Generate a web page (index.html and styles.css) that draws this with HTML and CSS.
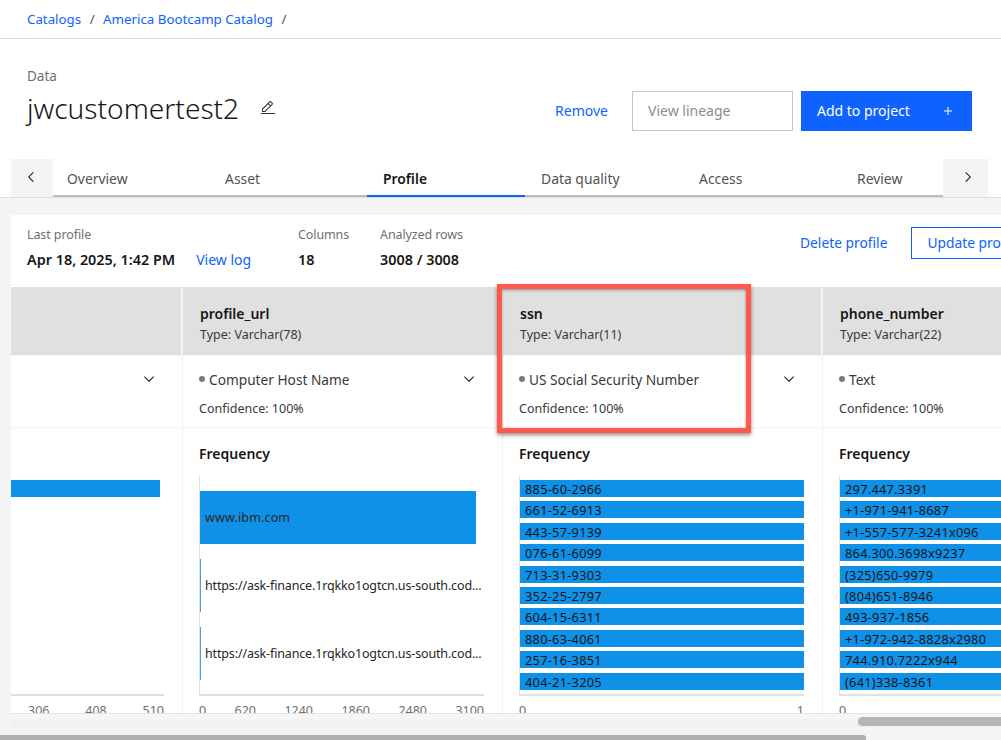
FILE: index.html
```html
<!DOCTYPE html>
<html lang="en">
<head>
<meta charset="utf-8">
<title>jwcustomertest2</title>
<link rel="stylesheet" href="styles.css">
</head>
<body>
<svg class="defs" width="0" height="0" aria-hidden="true">
  <symbol id="i-down" viewBox="0 0 32 32"><path d="M16 22L6 12l1.4-1.4L16 19.2l8.6-8.6L26 12z"/></symbol>
  <symbol id="i-left" viewBox="0 0 32 32"><path d="M10 16L20 6l1.4 1.4L12.8 16l8.6 8.6L20 26z"/></symbol>
  <symbol id="i-right" viewBox="0 0 32 32"><path d="M22 16L12 26l-1.4-1.4L19.2 16l-8.6-8.6L12 6z"/></symbol>
  <symbol id="i-plus" viewBox="0 0 32 32"><path d="M17 15V8h-2v7H8v2h7v7h2v-7h7v-2h-7z"/></symbol>
  <symbol id="i-edit" viewBox="0 0 32 32"><path d="M2 26h28v2H2zM25.4 9c.8-.8.8-2 0-2.8l-3.6-3.6c-.8-.8-2-.8-2.8 0l-15 15V24h6.4l15-15zm-5-5L24 7.6l-3 3L17.4 7l3-3zM6 22v-3.6l10-10l3.6 3.6l-10 10H6z"/></symbol>
</svg>
<div class="page">
  <nav class="crumbs">
    <a class="link">Catalogs</a><span class="sep">/</span>
    <a class="link">America Bootcamp Catalog</a><span class="sep">/</span>
  </nav>

  <header class="head">
    <div class="head-title">
      <div class="eyebrow">Data</div>
      <div class="title-row">
        <h1 class="title">jwcustomertest2</h1>
        <svg class="edit"><use href="#i-edit"/></svg>
      </div>
    </div>
    <div class="actions">
      <a class="link remove">Remove</a>
      <div class="btn-lineage">View lineage</div>
      <div class="btn-add"><span class="add-label">Add to project</span><svg class="plus"><use href="#i-plus"/></svg></div>
    </div>
  </header>

  <div class="tabbar">
    <div class="tab-arrow"><svg class="arrow"><use href="#i-left"/></svg></div>
    <div class="tabs">
      <div class="tab">Overview</div>
      <div class="tab">Asset</div>
      <div class="tab active">Profile</div>
      <div class="tab">Data quality</div>
      <div class="tab">Access</div>
      <div class="tab">Review</div>
    </div>
    <div class="tab-arrow right"><svg class="arrow"><use href="#i-right"/></svg></div>
  </div>

  <main class="content">
    <section class="panel">
      <div class="summary">
        <div class="stat stat-last">
          <div class="stat-label">Last profile</div>
          <div class="stat-line"><span class="stat-value">Apr 18, 2025, 1:42 PM</span><a class="link viewlog">View log</a></div>
        </div>
        <div class="stat stat-cols">
          <div class="stat-label">Columns</div>
          <div class="stat-value">18</div>
        </div>
        <div class="stat stat-rows">
          <div class="stat-label">Analyzed rows</div>
          <div class="stat-value">3008 / 3008</div>
        </div>
        <div class="summary-actions">
          <a class="link delete">Delete profile</a>
          <div class="btn-update">Update profile</div>
        </div>
      </div>

      <div class="grid">
        <div class="col col-first">
          <div class="col-head"></div>
          <div class="col-class"><div class="class-line"><span class="class-name"></span><svg class="chev"><use href="#i-down"/></svg></div></div>
          <div class="col-freq">
            <div class="chart chart-first">
              <div class="plot plot-first"><div class="bar bar-first"></div></div>
              <div class="ticks ticks-first"><span>306</span><span>408</span><span>510</span></div>
            </div>
          </div>
        </div>

        <div class="col">
          <div class="col-head"><div class="col-name">profile_url</div><div class="col-type">Type: Varchar(78)</div></div>
          <div class="col-class">
            <div class="class-line"><span class="class-name"><i class="dot"></i>Computer Host Name</span><svg class="chev"><use href="#i-down"/></svg></div>
            <div class="confidence">Confidence: 100%</div>
          </div>
          <div class="col-freq">
            <div class="freq-title">Frequency</div>
            <div class="chart">
              <div class="plot plot-tall">
                <div class="tall"><div class="tall-bar full"></div><span class="bar-text">www.ibm.com</span></div>
                <div class="tall"><div class="tall-bar thin"></div><span class="bar-text url">https://ask-finance.1rqkko1ogtcn.us-south.cod...</span></div>
                <div class="tall"><div class="tall-bar thin"></div><span class="bar-text url">https://ask-finance.1rqkko1ogtcn.us-south.cod...</span></div>
              </div>
              <div class="ticks"><span>0</span><span>620</span><span>1240</span><span>1860</span><span>2480</span><span>3100</span></div>
            </div>
          </div>
        </div>

        <div class="col">
          <div class="col-head"><div class="col-name">ssn</div><div class="col-type">Type: Varchar(11)</div></div>
          <div class="col-class">
            <div class="class-line"><span class="class-name"><i class="dot"></i>US Social Security Number</span><svg class="chev"><use href="#i-down"/></svg></div>
            <div class="confidence">Confidence: 100%</div>
          </div>
          <div class="col-freq">
            <div class="freq-title">Frequency</div>
            <div class="chart">
              <div class="plot">
                <div class="bar">885-60-2966</div><div class="bar">661-52-6913</div><div class="bar">443-57-9139</div><div class="bar">076-61-6099</div><div class="bar">713-31-9303</div><div class="bar">352-25-2797</div><div class="bar">604-15-6311</div><div class="bar">880-63-4061</div><div class="bar">257-16-3851</div><div class="bar">404-21-3205</div>
              </div>
              <div class="ticks"><span>0</span><span>1</span></div>
            </div>
          </div>
        </div>

        <div class="col">
          <div class="col-head"><div class="col-name">phone_number</div><div class="col-type">Type: Varchar(22)</div></div>
          <div class="col-class">
            <div class="class-line"><span class="class-name"><i class="dot"></i>Text</span></div>
            <div class="confidence">Confidence: 100%</div>
          </div>
          <div class="col-freq">
            <div class="freq-title">Frequency</div>
            <div class="chart">
              <div class="plot">
                <div class="bar">297.447.3391</div><div class="bar">+1-971-941-8687</div><div class="bar">+1-557-577-3241x096</div><div class="bar">864.300.3698x9237</div><div class="bar">(325)650-9979</div><div class="bar">(804)651-8946</div><div class="bar">493-937-1856</div><div class="bar">+1-972-942-8828x2980</div><div class="bar">744.910.7222x944</div><div class="bar">(641)338-8361</div>
              </div>
              <div class="ticks"><span>0</span><span>1</span></div>
            </div>
          </div>
        </div>
      </div>

      <div class="hscroll"><div class="hscroll-thumb"></div></div>
      <div class="callout"></div>
    </section>
    <div class="page-scroll"><div class="page-scroll-thumb"></div></div>
  </main>
</div>
</body>
</html>
```

FILE: styles.css
```css
* { box-sizing: border-box; }
html, body { margin: 0; height: 740px; overflow: hidden; background: #fff; }
body { font-family: "Noto Sans", "Open Sans", sans-serif; color: #161616; font-size: 14px; }
.defs { position: absolute; }
svg { fill: currentColor; display: block; flex: none; }
.page { display: flex; flex-direction: column; height: 740px; }
.link { color: #0f62fe; }

.crumbs { height: 39px; flex: none; border-bottom: 1px solid #dcdcdc; padding: 0 0 0 27px; display: flex; align-items: center; font-size: 13.3px; line-height: 20px; }
.sep { margin: 0 8.5px; color: #525252; }

.head { height: 120px; flex: none; display: flex; justify-content: space-between; padding: 0 29px 0 27px; }
.head-title { padding-top: 27px; }
.eyebrow { font-size: 13.5px; line-height: 20px; color: #6f6f6f; }
.title-row { display: flex; align-items: center; margin-top: 3px; }
.title { margin: 0; font-size: 28.1px; line-height: 38px; font-weight: 300; color: #161616; }
.edit { width: 16px; height: 16px; margin-left: 21px; margin-top: -1px; color: #333; }
.actions { display: flex; align-items: flex-start; padding-top: 52px; }
.remove { line-height: 40px; margin-right: 24px; }
.btn-lineage { width: 161px; height: 40px; border: 1px solid #c6c6c6; padding-left: 15px; line-height: 38px; color: #8d8d8d; margin-right: 8px; }
.btn-add { width: 171px; height: 40px; background: #0f62fe; color: #fff; display: flex; align-items: center; justify-content: space-between; padding: 0 16px; }
.add-label { margin-bottom: 1px; }
.plus { width: 16px; height: 16px; }

.tabbar { height: 39px; flex: none; display: flex; padding: 0 13px 0 11px; box-shadow: inset 0 -1px 0 #dedede; }
.tab-arrow { width: 42px; height: 38px; background: #f4f4f4; display: flex; align-items: center; justify-content: center; flex: none; padding: 0 2px 2px 0; position: relative; z-index: 1; }
.tab-arrow.right { width: 45px; padding: 0 0 2px 4px; }
.arrow { width: 16px; height: 16px; color: #161616; }
.tabs { flex: 1; display: flex; overflow: hidden; height: 38px; box-shadow: inset 0 -2px 0 #bdbdbd; margin-left: -2px; min-width: 0; }
.tab { width: 158px; flex: none; height: 38px; padding: 1px 0 0 16px; line-height: 37px; color: #525252; font-size: 13.9px; }
.tab.active { color: #161616; font-weight: 600; border-bottom: 2px solid #0f62fe; }

.content { flex: 1; min-height: 0; background: #f4f4f4; padding-top: 17px; display: flex; flex-direction: column; }
.panel { flex: 1; min-height: 0; margin-left: 11px; background: #fff; display: flex; flex-direction: column; overflow: hidden; position: relative; }
.summary { height: 72px; flex: none; display: flex; padding: 10px 0 0 16px; position: relative; white-space: nowrap; }
.stat-label { font-size: 12.5px; letter-spacing: -.1px; line-height: 20px; color: #6f6f6f; }
.stat-value { font-weight: 600; font-size: 14.4px; line-height: 20px; color: #161616; }
.stat-line { display: flex; align-items: center; margin-top: 5px; }
.stat-cols .stat-value, .stat-rows .stat-value { margin-top: 5px; }
.stat-last { width: 271px; }
.stat-cols { width: 82px; }
.viewlog { margin-left: 21px; margin-top: -2px; }
.summary-actions { position: absolute; left: 789px; top: 12px; display: flex; align-items: center; font-size: 13.8px; }
.delete { margin-bottom: 2px; }
.btn-update { width: 130px; height: 32px; border: 1px solid #0f62fe; color: #0f62fe; margin-left: 24px; padding-left: 15px; line-height: 30px; flex: none; }

.grid { flex: 1; min-height: 0; display: flex; overflow: hidden; width: 990px; }
.col { width: 320px; flex: none; display: flex; flex-direction: column; border-right: 1px solid #f0f0f0; }
.col-first { width: 172px; }
.col-head { height: 68px; flex: none; background: #e0e0e0; border-right: 2px solid #f4f4f4; margin-right: -1px; padding: 17px 0 0 17px; }
.col-name { font-weight: 600; font-size: 14px; line-height: 20px; color: #161616; }
.col-type { font-size: 12.5px; line-height: 20px; color: #393939; margin-top: 1px; }
.col-class { height: 73px; flex: none; border-top: 1px solid #f4f4f4; border-bottom: 1px solid #f4f4f4; padding: 13px 25px 0 16px; }
.class-line { display: flex; justify-content: space-between; align-items: center; height: 20px; }
.class-name { display: flex; align-items: center; font-size: 13.7px; color: #393939; }
.dot { width: 6px; height: 6px; border-radius: 50%; background: #7a7a7a; margin-right: 4px; }
.chev { width: 16px; height: 16px; color: #161616; }
.confidence { font-size: 12.5px; line-height: 20px; color: #393939; margin-top: 10px; }
.col-freq { flex: 1; min-height: 0; padding: 16px 0 0 16px; position: relative; }
.freq-title { font-weight: 600; font-size: 14px; line-height: 20px; height: 22px; color: #161616; }
.chart { width: 285px; margin-top: 9px; }
.plot { height: 221px; border-left: 1px solid #e0e0e0; border-bottom: 2px solid #e0e0e0; padding-top: 5px; display: flex; flex-direction: column; gap: 4.4px; }
.bar { height: 17px; flex: none; background: #0f91e8; font-size: 12.8px; letter-spacing: .25px; line-height: 18px; padding-left: 5px; color: #161616; white-space: nowrap; }
.plot-tall { gap: 15px; padding-top: 16px; }
.tall { height: 53px; flex: none; position: relative; display: flex; align-items: center; }
.tall-bar { height: 53px; background: #0f91e8; flex: none; }
.full { width: 276px; }
.thin { width: 1px; background: #3aa3f0; }
.bar-text { position: absolute; left: 5px; font-size: 12.5px; letter-spacing: .15px; color: #262626; white-space: nowrap; }
.bar-text.url { letter-spacing: -.15px; }
.ticks { display: flex; justify-content: space-between; font-size: 12.5px; line-height: 20px; color: #6f6f6f; margin-top: 5px; }
.chart-first { position: absolute; left: 0; top: 47px; margin: 0; width: 153px; }
.plot-first { border-left: 0; width: 153px; }
.bar-first { width: 149px; }
.ticks-first { padding-left: 17px; }

.callout { position: absolute; left: 486px; top: 69px; width: 254px; height: 149px; border: 5px solid #ff5a4f; box-shadow: 0 2px 4px rgba(0,0,0,.45), inset 0 1px 3px rgba(0,0,0,.4); }

.hscroll { height: 14px; flex: none; background: linear-gradient(#f7f7f7, #efefef); border-top: 1px solid #e2e2e2; padding-top: 3px; display: flex; justify-content: flex-end; }
.hscroll-thumb { width: 143px; height: 9px; background: #b5b5b5; border-radius: 5px 0 0 5px; }
.page-scroll { height: 13px; flex: none; padding-top: 8px; background: #f4f4f4; }
.page-scroll-thumb { width: 866px; height: 5px; background: #b0b0b0; border-radius: 0 3px 0 0; }
```
